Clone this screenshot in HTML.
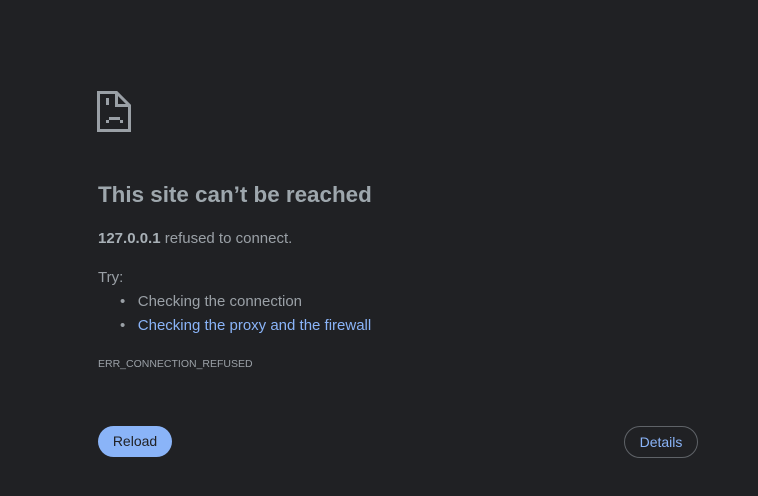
<!DOCTYPE html>
<html><head><style>
html,body{margin:0;background:#202124;width:758px;height:496px;overflow:hidden;font-family:"Liberation Sans",sans-serif;color:#9aa0a6;}
.a{position:absolute;white-space:nowrap}
h1{margin:0;font-size:22.4px;font-weight:bold;color:#9ea7ad;}
.btn{position:absolute;border-radius:16px;font-size:14px;text-align:center;box-sizing:border-box}
</style></head><body>
<svg class="a" style="left:97px;top:91px" width="36" height="42" viewBox="0 0 36 42">
<path d="M1.5 1.5H19.5L32.5 14.5V39.5H1.5Z" fill="none" stroke="#9aa0a6" stroke-width="3"/>
<path d="M19.5 1.5V14.5H32.5" fill="none" stroke="#9aa0a6" stroke-width="3"/>
<rect x="9" y="7" width="3" height="7" fill="#9aa0a6"/>
<rect x="9" y="29" width="3" height="3" fill="#9aa0a6"/>
<rect x="12" y="26" width="11" height="3" fill="#9aa0a6"/>
<rect x="23" y="29" width="3" height="3" fill="#9aa0a6"/>
</svg>
<h1 class="a" style="left:98px;top:182px">This site can’t be reached</h1>
<div class="a" style="left:98px;top:230px;font-size:15px"><b style="color:#a8b0b6">127.0.0.1</b> refused to connect.</div>
<div class="a" style="left:98px;top:269px;font-size:15px">Try:</div>
<div class="a" style="left:120px;top:293px;font-size:15px">•&nbsp;&nbsp;&nbsp;Checking the connection</div>
<div class="a" style="left:120px;top:317px;font-size:15px">•&nbsp;&nbsp;&nbsp;<span style="color:#8ab4f8">Checking the proxy and the firewall</span></div>
<div class="a" style="left:98px;top:358px;font-size:10.5px">ERR_CONNECTION_REFUSED</div>
<div class="btn" style="left:98px;top:426px;width:74px;height:31px;line-height:31px;background:#8ab4f8;color:#202124">Reload</div>
<div class="btn" style="left:624px;top:426px;width:74px;height:32px;line-height:30px;border:1px solid #5f6368;color:#8ab4f8">Details</div>
</body></html>
